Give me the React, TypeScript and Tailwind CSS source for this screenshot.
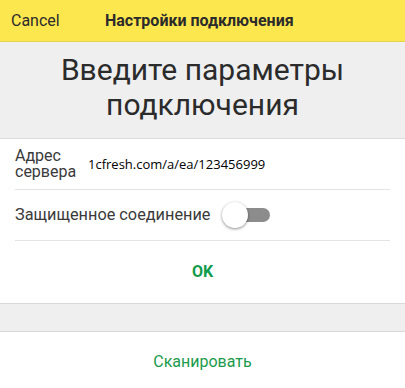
import React from "react";

export default function App() {
  return (
    <div className="w-[405px] h-[388px] bg-white overflow-hidden" style={{ fontFamily: "Roboto, 'Noto Sans', sans-serif" }}>
      <div className="h-[42px] bg-[#fde74f] border-b border-[#e3d24c] flex items-center text-[16px] text-[#2b2b2b]">
        <span className="pl-[11px] w-[105px]">Cancel</span>
        <span className="font-bold">Настройки подключения</span>
      </div>
      <div className="bg-[#efefef] border-b border-[#dcdcdc] pt-[10px] pb-[16px] text-center text-[30px] leading-[35px] text-[#2b2b2b]">
        Введите параметры
        <br />
        подключения
      </div>
      <div className="px-[15px]">
        <div className="h-[51px] flex items-center border-b border-[#e4e4e4]">
          <div className="w-[73px] text-[16px] leading-[16px] text-[#3a3a3a]">Адрес сервера</div>
          <div className="text-[13px] text-black pt-[1px]" style={{ fontFamily: "'Open Sans', 'Noto Sans', sans-serif" }}>1cfresh.com/a/ea/123456999</div>
        </div>
        <div className="h-[51px] flex items-center border-b border-[#e4e4e4]">
          <span className="text-[16.3px] text-[#3a3a3a]">Защищенное соединение</span>
          <div className="relative ml-[12px] w-[50px] h-[28px] flex items-center">
            <div className="absolute left-[4px] w-[44px] h-[14px] rounded-full bg-[#8c8c8c]" />
            <div className="absolute left-0 w-[26px] h-[26px] rounded-full bg-white shadow-[0_1px_3px_rgba(0,0,0,0.45)]" />
          </div>
        </div>
      </div>
      <div className="h-[62px] flex items-center justify-center text-[16px] font-bold text-[#119c4b]">OK</div>
      <div className="h-[29px] bg-[#efefef] border-y border-[#d9d9d9]" />
      <div className="h-[60px] flex items-center justify-center text-[16px] text-[#1a9a4c]">Сканировать</div>
    </div>
  );
}
